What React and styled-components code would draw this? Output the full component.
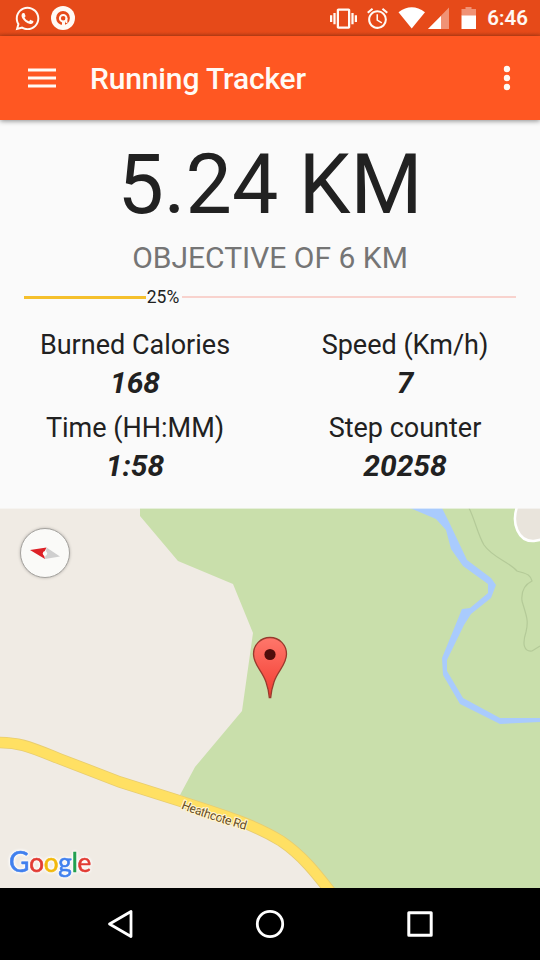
import React from "react";
import styled, { createGlobalStyle } from "styled-components";
import { FaWhatsapp } from "react-icons/fa";
import { MdVibration, MdAlarm } from "react-icons/md";

const GlobalStyle = createGlobalStyle`
  *, *::before, *::after { box-sizing: border-box; }
  body { margin: 0; background: #fafafa; font-family: Roboto, "Noto Sans", sans-serif; }
  svg { display: block; }
`;

const Screen = styled.div`
  display: flex;
  flex-direction: column;
  width: 540px;
  height: 960px;
  overflow: hidden;
  background: #fafafa;
  color: #212121;
`;

const StatusBar = styled.header`
  display: flex;
  justify-content: space-between;
  height: 36px;
  padding: 0 12px 0 14px;
  background: linear-gradient(#e64a19 0 32px, #cf4316 36px);
  color: #fffaf5;
`;

const StatusGroup = styled.div`
  display: flex;
  align-items: center;
  gap: ${(p) => p.$gap || 0}px;
`;

const Clock = styled.time`
  margin-left: 9px;
  font-size: 20.5px;
  font-weight: 500;
  line-height: 37px;
  letter-spacing: 0.1px;
  -webkit-text-stroke: 0.2px;
`;

const AppBar = styled.div`
  display: flex;
  align-items: center;
  flex: none;
  height: 84px;
  padding: 0 27px 0 28px;
  background: #ff5722;
  box-shadow: 0 1px 5px rgba(0, 0, 0, 0.45);
  color: #fffaf5;
  z-index: 1;
`;

const IconButton = styled.button`
  display: block;
  padding: 0;
  border: 0;
  background: none;
  color: inherit;
`;

const Title = styled.h1`
  flex: 1;
  margin: 2px 0 0 34px;
  font-size: 30px;
  font-weight: 500;
  line-height: 36px;
  letter-spacing: -0.15px;
`;

const Summary = styled.main`
  display: flex;
  flex-direction: column;
  flex: none;
  height: 388px;
`;

const Distance = styled.div`
  margin-top: 16px;
  font-size: 82.5px;
  line-height: 98px;
  text-align: center;
`;

const Objective = styled.div`
  margin-top: 6px;
  font-size: 30px;
  line-height: 36px;
  text-align: center;
  color: #757575;
`;

const Progress = styled.div`
  display: flex;
  align-items: center;
  height: 20px;
  margin: 11px 24px 0;
`;

const Reached = styled.div`
  width: 121.5px;
  height: 3px;
  background: #f5c02c;
`;

const Percent = styled.span`
  width: 36px;
  padding-right: 1px;
  font-size: 17.5px;
  line-height: 20px;
  text-align: center;
`;

const Remaining = styled.div`
  flex: 1;
  height: 2px;
  margin-bottom: 1px;
  background: #f8d2cd;
`;

const Stats = styled.section`
  display: grid;
  grid-template-columns: 1fr 1fr;
  grid-auto-rows: 83px;
  margin-top: 21px;
`;

const Stat = styled.div`
  display: flex;
  flex-direction: column;
  align-items: center;
`;

const StatLabel = styled.span`
  font-size: 27px;
  line-height: 34px;
`;

const StatValue = styled.strong`
  margin-top: 2px;
  font-size: 30px;
  font-style: italic;
  font-weight: 700;
  line-height: 38px;
`;

const MapPanel = styled.section`
  position: relative;
  flex: none;
  height: 380px;
  overflow: hidden;
`;

const RoadName = styled.text`
  font-family: Roboto, sans-serif;
  font-size: 12.4px;
  letter-spacing: -0.62px;
  fill: #654b22;
  stroke: #fff3cf;
  stroke-width: 2.5px;
  stroke-linejoin: round;
  paint-order: stroke;
`;

const Compass = styled.div`
  position: absolute;
  left: 20px;
  top: 20px;
  width: 50px;
  height: 50px;
  border: 1px solid #a5a39f;
  border-radius: 50%;
  background: #fafaf8;
  box-shadow: 0 0 3px rgba(0, 0, 0, 0.25);
`;

const Marker = styled.div`
  position: absolute;
  left: 252px;
  top: 128px;
`;

const Wordmark = styled.div`
  position: absolute;
  left: 9px;
  bottom: 9px;
  font-family: Lato, sans-serif;
  font-size: 26px;
  line-height: 34px;
  letter-spacing: -0.2px;
  -webkit-text-stroke: 0.6px;
  filter: drop-shadow(0 0 1.5px #fff) drop-shadow(0 0 1px #fff);
`;

const Letter = styled.span`
  color: ${(p) => p.$color};

  &:first-child {
    font-size: 28px;
  }
`;

const NavBar = styled.nav`
  display: grid;
  grid-template-columns: repeat(3, 150px);
  justify-content: center;
  align-items: center;
  flex: none;
  height: 72px;
  background: #000;
  color: #fff;
`;

const NavButton = styled(IconButton)`
  justify-self: center;
`;

const stats = [
  { label: "Burned Calories", value: "168" },
  { label: "Speed (Km/h)", value: "7" },
  { label: "Time (HH:MM)", value: "1:58" },
  { label: "Step counter", value: "20258" },
];

const wordmark = [
  ["G", "#4180ee"],
  ["o", "#e23c34"],
  ["o", "#f2b90d"],
  ["g", "#4180ee"],
  ["l", "#22a050"],
  ["e", "#e23c34"],
];

function NotificationIcon() {
  return (
    <svg width="24" height="24" viewBox="0 0 24 24">
      <circle cx="12" cy="12" r="12" fill="#fffaf5" />
      <circle cx="12" cy="12" r="6.900" fill="#e64a19" />
      <path d="M11 15.500h3v5h-3z" fill="#fffaf5" />
      <circle cx="12.200" cy="12.200" r="3.300" fill="none" stroke="#fffaf5" strokeWidth="2" />
      <path d="M15.500 12V17" stroke="#fffaf5" strokeWidth="1.800" />
    </svg>
  );
}

function SignalIcons() {
  return (
    <svg width="80" height="24" viewBox="398 6 80 24" fill="#fff">
      <path d="M398.500 12.200Q411.700 2.300 425 12.200L411.700 28.500Z" />
      <path d="M449 7.500V29H428Z" opacity=".4" />
      <path d="M441 16V29H428Z" />
      <path d="M465.500 7h6v2h4.500v7h-14.500V9h4z" opacity=".4" />
      <path d="M461.500 15.500h14.500V29h-14.500z" />
    </svg>
  );
}

function MapDrawing() {
  return (
    <svg width="540" height="380" viewBox="0 508 540 380">
      <rect y="508" width="540" height="380" fill="#f0ebe4" />
      <path
        d="M140 508V516L178 561L233 584L253 633L242 711L195 767L180 795L270 833L332 888H540V508Z"
        fill="#c9dfab"
      />
      <path
        d="M410 508H442L450 524L467 560L491 578L496 585L491 598L471 614L464 625L447 660V671L463 698L500 718H540V722L500 724L488 718L460 704L443 675L442 658L462 609L470 608L488 593L488 584L463 566L451 549L446 530L436 519Z"
        fill="#a9cbfd"
      />
      <path
        d="M469 508C475 520 478 535 484 545C493 558 508 561 517 571C527 574 530 574 532 581C524 585 521 592 522 601C526 615 529 620 526 632C522 644 524 652 532 651L540 646"
        fill="none"
        stroke="#b4ca98"
        strokeWidth="1.2"
      />
      <path d="M518 504C510 524 519 542 534 541L550 538V504Z" fill="#e9e4dc" stroke="#fff" strokeWidth="2.500" />
      <path
        d="M-5 742.500C20 742 30 747 60 759L120 782L180 801C220 814 254 824 281 841C302 855 316 873 333 895"
        fill="none"
        stroke="#e8cd70"
        strokeWidth="11.500"
      />
      <path
        d="M-5 742.500C20 742 30 747 60 759L120 782L180 801C220 814 254 824 281 841C302 855 316 873 333 895"
        fill="none"
        stroke="#ffe063"
        strokeWidth="9.800"
      />
      <path id="road-name" d="M181 808.500Q212 821 260 834" fill="none" />
      <RoadName>
        <textPath href="#road-name">Heathcote Rd</textPath>
      </RoadName>
      <rect y="508" width="540" height=".6" fill="#fafafa" />
    </svg>
  );
}

export default function App() {
  return (
    <Screen>
      <GlobalStyle />
      <StatusBar>
        <StatusGroup $gap={10}>
          <FaWhatsapp size={27} />
          <NotificationIcon />
        </StatusGroup>
        <StatusGroup>
          <StatusGroup $gap={8}>
            <MdVibration size={27} />
            <MdAlarm size={25} />
            <SignalIcons />
          </StatusGroup>
          <Clock>6:46</Clock>
        </StatusGroup>
      </StatusBar>

      <AppBar>
        <IconButton aria-label="Menu">
          <svg width="28" height="20" fill="currentColor">
            <path d="M0 0.500h28v3H0zM0 8.500h28v3H0zM0 16.500h28v3H0z" />
          </svg>
        </IconButton>
        <Title>Running Tracker</Title>
        <IconButton aria-label="More options">
          <svg width="12" height="26" fill="currentColor">
            <circle cx="6" cy="4" r="3.200" />
            <circle cx="6" cy="13" r="3.200" />
            <circle cx="6" cy="22" r="3.200" />
          </svg>
        </IconButton>
      </AppBar>

      <Summary>
        <Distance>5.24 KM</Distance>
        <Objective>OBJECTIVE OF 6 KM</Objective>
        <Progress>
          <Reached />
          <Percent>25%</Percent>
          <Remaining />
        </Progress>
        <Stats>
          {stats.map((s) => (
            <Stat key={s.label}>
              <StatLabel>{s.label}</StatLabel>
              <StatValue>{s.value}</StatValue>
            </Stat>
          ))}
        </Stats>
      </Summary>

      <MapPanel>
        <MapDrawing />
        <Compass>
          <svg width="48" height="48" viewBox="21 529 48 48">
            <path d="M30 550L46.500 547.500L43.500 553.500L45 559Z" fill="#dd2127" />
            <path d="M46.500 547.500L60 556.500L45 559Z" fill="#cfcfcf" />
            <circle cx="45" cy="553.500" r="2.200" fill="#fafaf8" />
          </svg>
        </Compass>
        <Marker>
          <svg width="36" height="64" viewBox="252 636 36 64">
            <defs>
              <linearGradient id="pin" x1="0" y1="0" x2="0" y2="1">
                <stop offset="0" stopColor="#ff776b" />
                <stop offset="1" stopColor="#f23b30" />
              </linearGradient>
            </defs>
            <path
              d="M270 637.500C260.500 637.500 253.500 645 253.500 654C253.500 665 262 670 266 682C268 688 269 693 269.300 697.500H270.700C271 693 272 688 274 682C278 670 286.500 665 286.500 654C286.500 645 279.500 637.500 270 637.500Z"
              fill="url(#pin)"
              stroke="#983a2d"
              strokeWidth="1.300"
            />
            <circle cx="270" cy="654.500" r="5.600" fill="#4f0d0b" />
          </svg>
        </Marker>
        <Wordmark>
          {wordmark.map(([letter, color], i) => (
            <Letter key={i} $color={color}>
              {letter}
            </Letter>
          ))}
        </Wordmark>
      </MapPanel>

      <NavBar>
        <NavButton aria-label="Back">
          <svg width="28" height="30" fill="none" stroke="currentColor" strokeWidth="2.800" strokeLinejoin="round">
            <path d="M25 2.500V27.500L3.500 15Z" />
          </svg>
        </NavButton>
        <NavButton aria-label="Home">
          <svg width="30" height="30" fill="none" stroke="currentColor" strokeWidth="2.800">
            <circle cx="15" cy="15" r="12.700" />
          </svg>
        </NavButton>
        <NavButton aria-label="Recent apps">
          <svg width="30" height="30" fill="none" stroke="currentColor" strokeWidth="3" strokeLinejoin="round">
            <rect x="3.800" y="3.800" width="22.400" height="22.400" />
          </svg>
        </NavButton>
      </NavBar>
    </Screen>
  );
}
